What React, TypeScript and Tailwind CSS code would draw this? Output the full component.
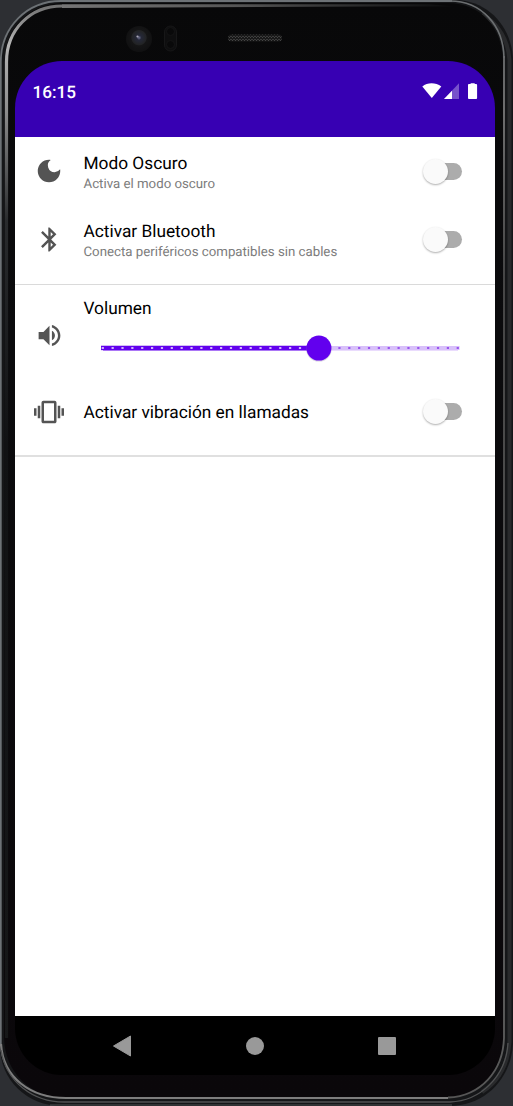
import type { ReactNode } from "react";

function Toggle() {
  return (
    <div className="relative h-[26px] w-[40px] shrink-0" role="switch" aria-checked="false">
      <div className="absolute left-[5px] top-[4.5px] h-[17px] w-[34px] rounded-full bg-[#acacac]" />
      <div className="absolute left-0 top-[0.5px] size-[25px] rounded-full bg-[#fafafa] shadow-[0_1px_2px_rgba(0,0,0,0.32)]" />
    </div>
  );
}

function Row({ icon, title, detail, className }: { icon: ReactNode; title: string; detail?: string; className: string }) {
  return (
    <div className={`flex items-center pr-[32px] ${className}`}>
      <div className="flex w-[68px] shrink-0 justify-center">{icon}</div>
      <div className={`flex-1 whitespace-nowrap pl-[0.5px] ${detail ? "pt-[6px]" : "pt-[4px]"}`}>
        <div className="text-[17.3px] leading-[21px] text-black">{title}</div>
        {detail && <div className="text-[13.25px] leading-[20px] text-[#7c7c7c]">{detail}</div>}
      </div>
      <Toggle />
    </div>
  );
}

function MoonIcon() {
  return (
    <svg width="30" height="30" viewBox="0 0 24 24" fill="#545454">
      <path d="M12 3a9 9 0 1 0 9 9c0-.46-.04-.92-.1-1.36a5.389 5.389 0 0 1-4.4 2.26 5.403 5.403 0 0 1-3.14-9.8c-.44-.06-.9-.1-1.36-.1z" />
    </svg>
  );
}

function BluetoothIcon() {
  return (
    <svg width="29" height="29" viewBox="0 0 24 24" fill="#545454">
      <path d="M17.71 7.71L12 2h-1v7.59L6.41 5 5 6.41 10.59 12 5 17.59 6.41 19 11 14.41V22h1l5.71-5.71-4.3-4.29 4.3-4.29zM13 5.83l1.88 1.88L13 9.59V5.83zm1.88 10.46L13 18.17v-3.76l1.88 1.88z" />
    </svg>
  );
}

function VolumeIcon() {
  return (
    <svg width="29" height="29" viewBox="0 0 24 24" fill="#545454">
      <path d="M3 9v6h4l5 5V4L7 9H3zm13.5 3c0-1.77-1.02-3.29-2.5-4.03v8.05c1.48-.73 2.5-2.25 2.5-4.02zM14 3.23v2.06c2.89.86 5 3.54 5 6.71s-2.11 5.85-5 6.71v2.06c4.01-.91 7-4.49 7-8.77s-2.99-7.86-7-8.77z" />
    </svg>
  );
}

function VibrationIcon() {
  return (
    <svg width="30" height="30" viewBox="0 0 24 24" fill="#545454">
      <path d="M0 15h2V9H0v6zm3 2h2V7H3v10zm19-8v6h2V9h-2zm-3 8h2V7h-2v10zM16.5 3h-9C6.67 3 6 3.67 6 4.5v15c0 .83.67 1.5 1.5 1.5h9c.83 0 1.5-.67 1.5-1.5v-15c0-.83-.67-1.5-1.5-1.5zM16 19H8V5h8v14z" />
    </svg>
  );
}

const ticks = Array.from({ length: 37 }, (_, i) => i);

function VolumeSlider() {
  return (
    <svg className="mt-[11px] block" width="379" height="34" viewBox="0 0 379 34" fill="none">
      <rect x="18" y="15" width="358.5" height="4" fill="#d8c0fa" />
      <rect x="18" y="19" width="357" height="1" fill="#eadcfd" />
      <rect x="18" y="15" width="218" height="4" fill="#6200ee" />
      <rect x="20" y="19" width="216" height="1" fill="#ab76f6" />
      <rect x="18" y="14.5" width="218" height=".5" fill="#a77bea" />
      {ticks.map((i) => (
        <rect key={i} x={18.7 + i * 9.86} y="16" width="2.2" height="2" fill={i < 22 ? "#cfb3fb" : "#9a55ee"} />
      ))}
      <circle cx="235.9" cy="17.9" r="12.7" fill="#9c8bb5" opacity=".4" />
      <circle cx="235.9" cy="17.1" r="12.5" fill="#6200ee" />
    </svg>
  );
}

function StatusIcons() {
  return (
    <svg width="58" height="18" viewBox="0 0 58 18" fill="#fff">
      <path d="M.3 4.4C5.4.1 13.6.1 19.3 4.4L9.8 16z" />
      <path d="M37 1.2V17H22z" fillOpacity=".32" />
      <path d="M30 8.7V17h-8z" />
      <path d="M48.6 1.2h4.1V2h1.4q1 0 1 .9v13.2q0 .9-.9.9h-7.3q-.9 0-.9-.9V2.9q0-.9.9-.9h1.7z" />
    </svg>
  );
}

function PhoneShell() {
  return (
    <svg className="absolute inset-0" width="513" height="1106" viewBox="0 0 513 1106" fill="none">
      <defs>
        <linearGradient id="leftRim" x1="0" y1="0" x2="0" y2="1106" gradientUnits="userSpaceOnUse">
          <stop offset="0" stopColor="#686868" />
          <stop offset=".04" stopColor="#b5b5b5" />
          <stop offset=".1" stopColor="#8d8d8d" />
          <stop offset=".2" stopColor="#292b2d" />
          <stop offset=".4" stopColor="#111214" />
          <stop offset="1" stopColor="#171819" />
        </linearGradient>
        <linearGradient id="topRim" x1="55" y1="0" x2="455" y2="0" gradientUnits="userSpaceOnUse">
          <stop stopColor="#777" />
          <stop offset=".45" stopColor="#565656" />
          <stop offset="1" stopColor="#090a0b" />
        </linearGradient>
        <linearGradient id="rightRim" x1="0" y1="0" x2="0" y2="1106" gradientUnits="userSpaceOnUse">
          <stop stopColor="#5f6265" />
          <stop offset=".1" stopColor="#777" />
          <stop offset=".25" stopColor="#4b4b4b" />
          <stop offset=".9" stopColor="#606060" />
          <stop offset="1" stopColor="#555" />
        </linearGradient>
        <linearGradient id="face" x1="0" y1="0" x2="0" y2="1">
          <stop stopColor="#080809" />
          <stop offset=".3" stopColor="#0b0b0d" />
          <stop offset="1" stopColor="#0a070a" />
        </linearGradient>
        <radialGradient id="lens" cx=".5" cy=".45" r=".5">
          <stop stopColor="#6f7190" />
          <stop offset=".18" stopColor="#252838" />
          <stop offset=".55" stopColor="#222324" />
          <stop offset=".62" stopColor="#151516" />
          <stop offset="1" stopColor="#111112" />
        </radialGradient>
        <pattern id="mesh" width="3" height="3" patternUnits="userSpaceOnUse">
          <rect width="3" height="3" fill="#191919" />
          <path d="M0 0l2 2M3 0L1 2" stroke="#494949" strokeWidth=".7" />
        </pattern>
      </defs>
      <path d="M0 62C0 27 27 0 62 0H456C489 1 511 27 513 58V1044C511 1078 486 1106 449 1106H62C27 1106 0 1080 0 1046z" fill="#151618" />
      <path d="M482 14C498 24 508 40 509.5 60V1042C508 1064 499 1081 482 1092" stroke="#292a2c" strokeWidth="4" />
      <path d="M5 60C5 28 29 4 62 3H448C481 3 502 28 503 60V1038C502 1072 480 1097 448 1098H66C31 1098 5 1073 4 1038z" fill="url(#face)" />
      <path d="M.8 1046V62C.8 27 27 1 61 1H452" stroke="#6d7276" strokeWidth="1.8" />
      <path d="M450 1C481 1 503.5 25 504 58" stroke="#6b6e70" strokeWidth="1.6" />
      <path d="M6.5 1038V62C6.5 30 30 6 62 6" stroke="url(#leftRim)" strokeWidth="3.2" />
      <path d="M62 4.2H430L455 6.4H380L62 8z" fill="url(#topRim)" />
      <path d="M504 56V1038C503 1071 481 1096 448 1097.5" stroke="url(#rightRim)" strokeWidth="1.8" />
      <path d="M1 1044C3 1078 31 1098 66 1098H448" stroke="#7d7d7d" strokeWidth="2.2" />
      <path d="M1 1050C6 1082 33 1102 64 1102H450C480 1101 506 1077 508 1043" stroke="#515253" strokeWidth="1.3" />
      <path d="M50 1105H452" stroke="#4c4e51" strokeWidth="1" />
      <circle cx="139" cy="39" r="13" fill="url(#lens)" />
      <circle cx="137.5" cy="36.5" r="1.1" fill="#aaa7b5" />
      <rect x="164.5" y="26" width="12" height="25" rx="6" fill="#0e0e0f" stroke="#171718" />
      <circle cx="170.5" cy="31.5" r="4" fill="#09090a" stroke="#151515" />
      <circle cx="170.5" cy="44.5" r="4" fill="#09090a" stroke="#151515" />
      <rect x="228" y="34.5" width="54" height="7" rx="3.5" fill="url(#mesh)" />
    </svg>
  );
}

export default function App() {
  return (
    <div className="relative h-[1106px] w-[513px] overflow-hidden bg-[#2d2f33] pl-[15px] pt-[61px] font-['Roboto',sans-serif] [text-rendering:geometricPrecision]">
      <PhoneShell />
      <main className="relative flex h-[1014px] w-[480px] flex-col overflow-hidden rounded-[47px]">
        <header className="flex h-[76px] shrink-0 items-start justify-between bg-[#3700b3] pl-[17.5px] pr-[15px] pt-[21px]">
          <span className="pt-px text-[17.2px] font-medium leading-[21px] text-white">16:15</span>
          <StatusIcons />
        </header>
        <section className="h-[148px] shrink-0 border-b border-[#dadada] bg-white">
          <Row className="h-[68px]" icon={<MoonIcon />} title="Modo Oscuro" detail="Activa el modo oscuro" />
          <Row className="h-[69px]" icon={<BluetoothIcon />} title="Activar Bluetooth" detail="Conecta periféricos compatibles sin cables" />
        </section>
        <section className="h-[172px] shrink-0 border-b-2 border-[#e0e0e0] bg-white">
          <div className="flex h-[92px]">
            <div className="flex w-[68px] shrink-0 justify-center pt-[36px]"><VolumeIcon /></div>
            <div className="pt-[14px]">
              <div className="pl-[0.5px] text-[17.3px] leading-[21px] text-black">Volumen</div>
              <VolumeSlider />
            </div>
          </div>
          <Row className="h-[69px]" icon={<VibrationIcon />} title="Activar vibración en llamadas" />
        </section>
        <div className="flex-1 bg-white" />
        <nav className="grid h-[59px] shrink-0 grid-cols-3 items-center bg-black px-[42px]">
          <svg className="mx-auto" width="20" height="22" viewBox="0 0 20 22" fill="#999"><path d="M17.5 1v20L.5 11z" stroke="#999" strokeWidth="1" strokeLinejoin="round" /></svg>
          <div className="mx-auto size-[18px] rounded-full bg-[#999]" />
          <div className="mx-auto size-[18px] rounded-[1px] bg-[#999]" />
        </nav>
      </main>
    </div>
  );
}
